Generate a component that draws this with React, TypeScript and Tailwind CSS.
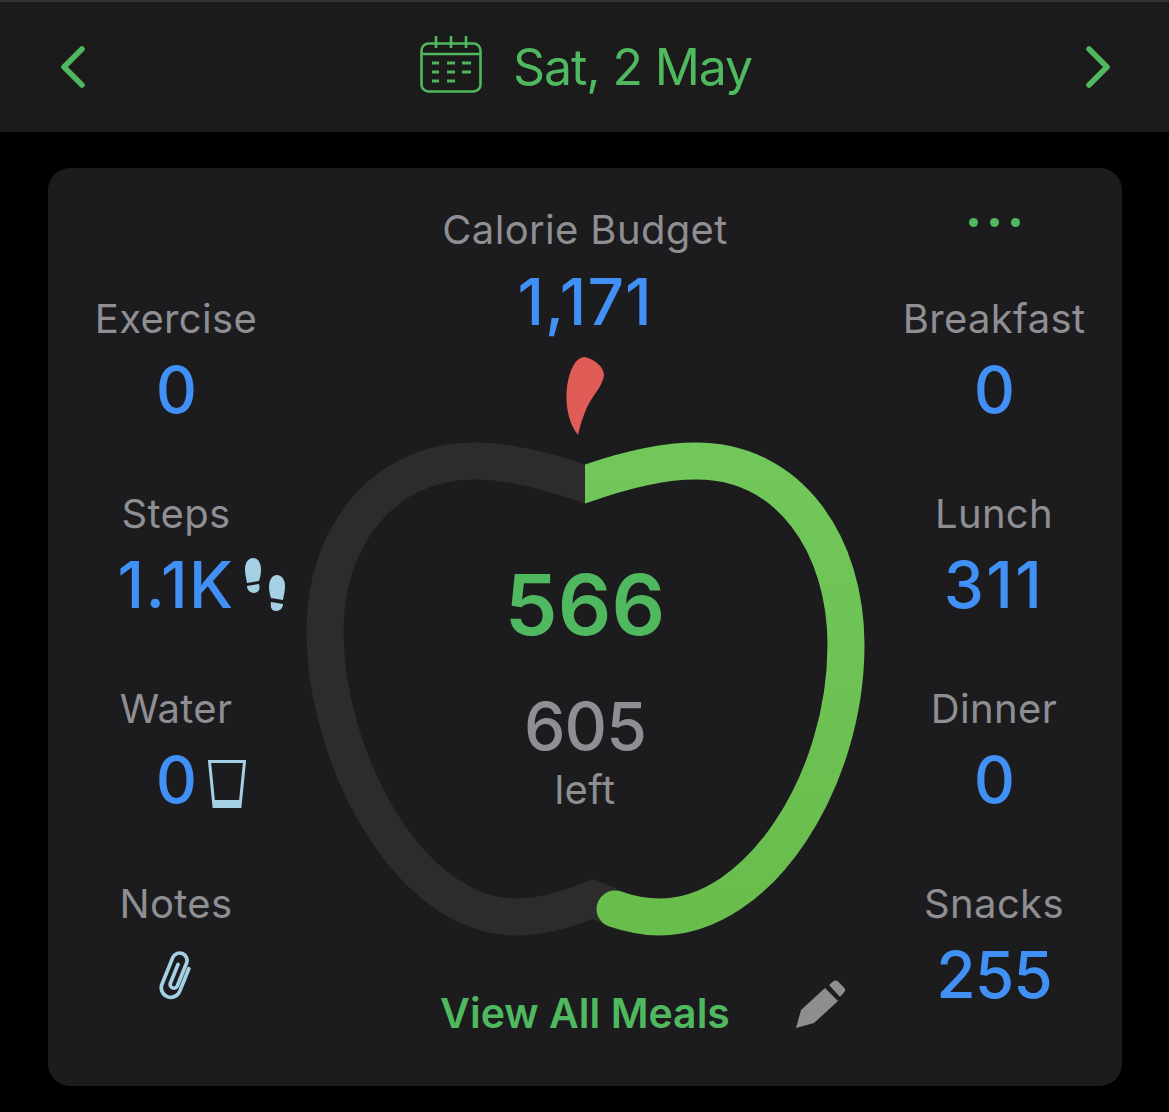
import type { ReactNode } from 'react';

const font = 'font-[Inter,"Liberation_Sans",sans-serif]';

function Stat({ label, value, spacing = 'tracking-[-1px]', children }: { label: string; value?: string; spacing?: string; children?: ReactNode }) {
  return (
    <div className="h-[195px] flex flex-col items-center">
      <div className="text-[40px] leading-[48px] tracking-[0.35px] text-[#8e8e93] whitespace-nowrap">{label}</div>
      <div className={`relative mt-[11px] h-[72px] w-full flex items-center justify-center text-[64px] leading-[72px] font-medium text-[#4090f5] ${spacing}`}>
        {value}
        {children}
      </div>
    </div>
  );
}

function Calendar() {
  return (
    <svg className="mt-[-6px] ml-[1px]" width="62" height="58" viewBox="0 0 62 58" fill="none" stroke="currentColor">
      <rect x="1.500" y="8.500" width="59" height="48" rx="7" strokeWidth="2.600" />
      <path d="M1.500 19h59M16 1v12M31 1v12M46 1v12" strokeWidth="2.600" />
      <path d="M12 28h7M27 28h8M42 28h9M12 37h7M27 37h8M42 37h9M12 46h7M27 46h8" strokeWidth="3" />
    </svg>
  );
}

function Shoes() {
  return (
    <svg className="absolute left-1/2 ml-[69px] top-[9px]" width="40" height="53" viewBox="0 0 40 53" fill="#a5d0e4">
      <path d="M8 0c5 0 8 5 8 12 0 4-1 8-2 11l-12 2C1 20 0 15 0 11 0 5 3 0 8 0Z" />
      <path d="M2 28l12-2c1 4 1 8-5 9-4 0-7-3-7-7Z" />
      <path d="M32 17c-5 0-8 5-8 12 0 4 1 8 2 11l12 2c1-5 2-10 2-14 0-6-3-11-8-11Z" />
      <path d="M26 44l12 2c0 4-3 7-7 7-4 0-6-3-5-9Z" />
    </svg>
  );
}

function Glass() {
  return (
    <svg className="absolute left-1/2 ml-[32px] top-[16px]" width="38" height="48" viewBox="0 0 38 48" fill="none">
      <path d="M1.500 1.500h35L32 46.500H6Z" stroke="#a5d0e4" strokeWidth="3" />
      <path d="M5 40h28l-1 8H6Z" fill="#a5d0e4" />
    </svg>
  );
}

function Clip() {
  return (
    <svg width="36" height="50" viewBox="0 0 36 50" fill="none" stroke="#a5d0e4" strokeWidth="3.500" strokeLinecap="round">
      <g transform="translate(18 25) rotate(22) scale(1.060) translate(-10 -22)">
        <path d="M19 12V35a9 9 0 0 1-18 0V8a7 7 0 0 1 14 0V31a3.500 3.500 0 0 1-7 0V12" />
      </g>
    </svg>
  );
}

function Pencil() {
  return (
    <svg width="50" height="50" viewBox="0 0 50 50" fill="#8e8e8e">
      <path d="M0 48 5 30 29 8 42 21 18 43Z" />
      <path d="M33 5 37 1.500c1.500-1.500 3.500-1.500 5 0l6 6c1.500 1.500 1.500 3.500 0 5L44 17Z" />
    </svg>
  );
}

export default function App() {
  return (
    <div className={`${font} w-[1169px] h-[1112px] bg-black overflow-hidden`}>
      {/* Header */}
      <div className="h-[132px] bg-[#1b1b1b] border-t-2 border-[#333333] flex items-center justify-between pl-[60px] pr-[58px] text-[#50b85f]">
        <svg width="26" height="42" viewBox="0 0 26 42" fill="none" stroke="currentColor" strokeWidth="5.500" strokeLinecap="round" strokeLinejoin="round">
          <path d="M22 3 4 21l18 18" />
        </svg>
        <div className="flex items-center gap-[31px]">
          <Calendar />
          <span className="text-[50px] leading-[60px] tracking-[-1.100px]">Sat, 2 May</span>
        </div>
        <svg width="26" height="42" viewBox="0 0 26 42" fill="none" stroke="currentColor" strokeWidth="5.500" strokeLinecap="round" strokeLinejoin="round">
          <path d="M4 3l18 18L4 39" />
        </svg>
      </div>

      {/* Card */}
      <div className="mt-[36px] ml-[48px] w-[1074px] h-[918px] rounded-[22px] bg-[#1c1c1e] grid grid-cols-[256px_562px_256px]">
        <div className="pt-[127px]">
          <Stat label="Exercise" value="0" />
          <Stat label="Steps" value="1.1K" spacing="tracking-[1.500px]">
            <Shoes />
          </Stat>
          <Stat label="Water" value="0">
            <Glass />
          </Stat>
          <Stat label="Notes">
            <Clip />
          </Stat>
        </div>

        <div className="flex flex-col items-center">
          <div className="mt-[38px] text-[40px] leading-[48px] tracking-[0.35px] text-[#8e8e93]">Calorie Budget</div>
          <div className="h-[72px] mt-[12px] text-[64px] leading-[72px] font-medium tracking-[1px] text-[#4090f5]">1,171</div>
          <div className="relative w-[562px] h-[610px] mt-[2px]">
            <svg width="562" height="610" viewBox="304 340 562 610" fill="none">
              <defs>
                <linearGradient id="ring" x1="0" y1="0" x2="0" y2="1">
                  <stop offset="0" stopColor="#72c75b" />
                  <stop offset="1" stopColor="#69bd4c" />
                </linearGradient>
                <clipPath id="leftHalf">
                  <path d="M300 340H585V700H640V950H300Z" />
                </clipPath>
                <clipPath id="rightHalf">
                  <rect x="585" y="340" width="290" height="610" />
                </clipPath>
              </defs>
              <path d="M578 435C570 425 566 410 566.500 395 567 378 573 358 584 357 592 358 604 366 604 375 603 384 596 392 591 400 585 410 581 422 578 435Z" fill="#e05d57" />
              <path clipPath="url(#leftHalf)" d="M625 498 585 484C545 470 505 461 474 461 385 461 325 535 325 630 325 760 410 917 516 917 545 917 570 908 593 899L620 910" stroke="#2c2c2e" strokeWidth="37" strokeMiterlimit="4" />
              <path clipPath="url(#rightHalf)" d="M545 498 585 484C625 470 665 461 696 461 790 461 846 545 846 645 846 780 760 917 659 917 645 917 630 914 615 909" stroke="url(#ring)" strokeWidth="37" strokeLinecap="round" />
            </svg>
            <div className="absolute inset-0 flex flex-col items-center">
              <div className="mt-[217px] text-[84px] leading-[96px] font-semibold text-[#50b85f]">566</div>
              <div className="mt-[37px] text-[66px] leading-[72px] font-medium tracking-[-1px] text-[#8e8e93]">605</div>
              <div className="mt-[4px] text-[40px] leading-[48px] tracking-[0.35px] text-[#8e8e93]">left</div>
            </div>
          </div>
          <div className="mt-[39px] w-full grid grid-cols-[1fr_auto_1fr] items-center">
            <div />
            <div className="text-[41px] leading-[48px] font-semibold text-[#50b85f]">View All Meals</div>
            <div className="pl-[66px] mt-[-16px]">
              <Pencil />
            </div>
          </div>
        </div>

        <div>
          <div className="h-[127px] pt-[50px] flex justify-center gap-[12px]">
            <div className="w-[9px] h-[9px] rounded-full bg-[#50b85f]" />
            <div className="w-[9px] h-[9px] rounded-full bg-[#50b85f]" />
            <div className="w-[9px] h-[9px] rounded-full bg-[#50b85f]" />
          </div>
          <Stat label="Breakfast" value="0" />
          <Stat label="Lunch" value="311" spacing="tracking-[2.500px]" />
          <Stat label="Dinner" value="0" />
          <Stat label="Snacks" value="255" />
        </div>
      </div>
    </div>
  );
}
